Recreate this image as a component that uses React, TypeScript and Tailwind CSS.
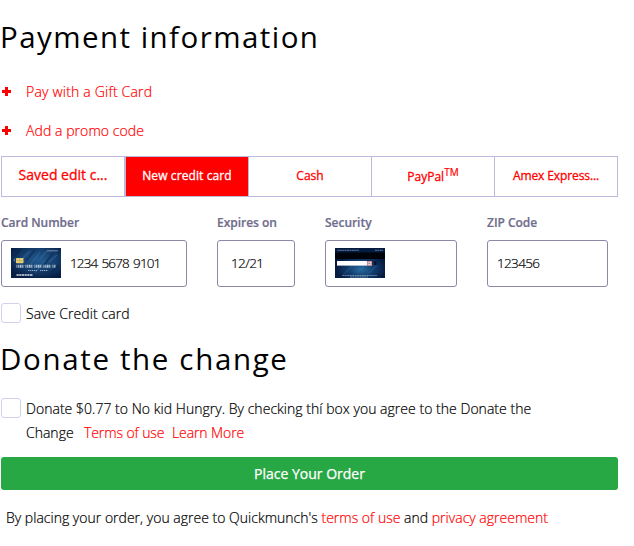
import type { ReactNode } from "react";

function CardFront() {
  return (
    <svg width="50" height="30" viewBox="0 0 50 30" className="mb-px shrink-0">
      <defs>
        <radialGradient id="front" cx="0.55" cy="0.4" r="0.65">
          <stop offset="0" stopColor="#235b91" />
          <stop offset="0.55" stopColor="#153f6e" />
          <stop offset="1" stopColor="#071d42" />
        </radialGradient>
      </defs>
      <rect width="50" height="30" fill="url(#front)" />
      <path d="M12 10L19 3M20 16L29 4M29 11L36 3M38 14L46 7M24 25L34 12" stroke="#3a76ab" strokeWidth="1.2" opacity="0.45" />
      <path d="M15 13L24 2M33 17L42 5M4 8L9 2M40 25L48 17" stroke="#06234d" strokeWidth="1.5" opacity="0.55" />
      <rect x="36" y="2.3" width="11" height="1" fill="#b7c8d8" opacity="0.6" />
      <path d="M4 10.5L2.8 12L4 13.5" stroke="#b9c6cf" strokeWidth="0.6" fill="none" />
      <rect x="5" y="10" width="7.5" height="5.2" rx="0.6" fill="#e6cd78" />
      <path d="M5 12.5H12.5M8.7 10V15" stroke="#b89b4d" strokeWidth="0.4" />
      <path d="M5.5 18.3H44.5" stroke="#e1eaf1" strokeWidth="3" strokeDasharray="0.9 0.8 1.2 0.6 1.5 0.7 1.1 2.2" opacity="0.85" />
      <path d="M5.5 17.6H44.5M6.5 19.2H44.5" stroke="#5c7f9f" strokeWidth="0.6" strokeDasharray="0.8 1.1" />
      <path d="M17 22.5H26M29 22.5H37" stroke="#a9bdcf" strokeWidth="0.9" strokeDasharray="1.3 0.7" />
      <path d="M5.5 27H22" stroke="#d5dee7" strokeWidth="1.4" strokeDasharray="2.2 0.5" />
    </svg>
  );
}

function CardBack() {
  return (
    <svg width="50" height="30" viewBox="0 0 50 30" className="mb-px shrink-0">
      <defs>
        <radialGradient id="back" cx="0.52" cy="0.7" r="0.5">
          <stop offset="0" stopColor="#2a6c9f" />
          <stop offset="0.5" stopColor="#123f70" />
          <stop offset="1" stopColor="#061b40" />
        </radialGradient>
      </defs>
      <rect width="50" height="30" fill="url(#back)" />
      <path d="M8 27L17 18M22 25L29 18M32 27L42 17" stroke="#3980b0" strokeWidth="1.2" opacity="0.25" />
      <path d="M2.5 2.3H24M40 2.3H48" stroke="#a8bbcc" strokeWidth="0.9" opacity="0.65" strokeDasharray="2 0.4" />
      <rect y="4.5" width="50" height="6.5" fill="#01030a" />
      <rect x="2" y="13" width="35" height="4.6" fill="#fff" />
      <rect x="32.3" y="13.4" width="4.2" height="3.8" fill="#f4dfe0" stroke="#c45f6b" strokeWidth="0.7" />
      <rect x="33.2" y="14.8" width="2.3" height="0.9" fill="#77777f" />
      <rect x="39" y="13.5" width="2.5" height="3.5" fill="#051127" />
      <path d="M7.5 27.5H42M15 29H33" stroke="#b5c7d6" strokeWidth="0.7" opacity="0.75" strokeDasharray="2 0.4" />
    </svg>
  );
}

function Extra({ children, className }: { children: string; className: string }) {
  return (
    <a className="flex h-[39px] items-center text-[14px] text-[#f00]">
      <svg width="9" height="9" viewBox="0 0 9 9" className="ml-px mr-[15px]" shapeRendering="crispEdges">
        <path d="M3 0H6V3H9V6H6V9H3V6H0V3H3Z" fill="#f00" />
      </svg>
      <span className={className}>{children}</span>
    </a>
  );
}

function Field({ label, className, children }: { label: string; className: string; children: ReactNode }) {
  return (
    <div className={className}>
      <div className="h-[28px] pt-px text-[12px] leading-5 font-semibold tracking-[-0.03px] text-[#6f6d8c]">{label}</div>
      <div className="flex h-[47px] items-center rounded-[3px] border border-[#8b89a5] px-[9px] text-[14px] text-[#000]">{children}</div>
    </div>
  );
}

function Checkbox() {
  return <span className="h-5 w-5 shrink-0 rounded-[3px] border border-[#d3d0ec] bg-white" />;
}

export default function App() {
  return (
    <main className="h-[546px] w-[634px] overflow-hidden bg-white pl-px font-['Open_Sans','Noto_Sans',sans-serif] font-light whitespace-nowrap text-black [-webkit-text-stroke:0.2px]">
      <h1 className="-ml-px h-[72px] pt-[17px] text-[29.5px] leading-10 font-normal tracking-[1.45px] [-webkit-text-stroke:0px]">Payment information</h1>
      <Extra className="tracking-[0.2px]">Pay with a Gift Card</Extra>
      <Extra className="tracking-[0.07px]">Add a promo code</Extra>
      <div className="mt-[6px] flex h-[41px] w-[617px] border border-[#bdb9da] text-[12px] font-normal text-[#f00] [-webkit-text-stroke:0.3px]">
        <div className="flex w-[123px] items-center justify-center border-r border-[#bdb9da] pb-[4px] text-[14px]">Saved edit c...</div>
        <div className="flex w-[124px] items-center justify-center border-x border-[#bdb9da] bg-[#f00] pb-px tracking-[0.1px] text-white">New credit card</div>
        <div className="flex w-[123px] items-center justify-center border-r border-[#bdb9da] pb-px">Cash</div>
        <div className="flex w-[123px] items-center justify-center border-r border-[#bdb9da]">
          <span>PayPal<sup className="text-[10px] [-webkit-text-stroke:0.2px]">TM</sup></span>
        </div>
        <div className="flex flex-1 items-center justify-center pb-px tracking-[-0.1px]">Amex Express...</div>
      </div>
      <div className="mt-[15px] flex gap-[30px]">
        <Field label="Card Number" className="w-[186px]"><CardFront /><span className="ml-[9px] text-[13.5px] tracking-[-0.88px] [word-spacing:1.6px]">1234 5678 9101</span></Field>
        <Field label="Expires on" className="w-[78px]"><span className="ml-[4px] text-[13.5px] tracking-[-0.6px]">12/21</span></Field>
        <Field label="Security" className="w-[132px]"><CardBack /></Field>
        <Field label="ZIP Code" className="w-[121px]"><span className="text-[13.5px] tracking-[-0.65px]">123456</span></Field>
      </div>
      <label className="mt-4 flex h-5 items-center gap-[5px] text-[14px] tracking-[0.08px]"><Checkbox /><span>Save Credit card</span></label>
      <h2 className="-ml-px mt-[16px] h-[59px] text-[29.5px] leading-10 font-normal tracking-[1.65px] [-webkit-text-stroke:0px]">Donate the change</h2>
      <div className="flex h-[59px] gap-[5px] text-[14px] leading-6">
        <Checkbox />
        <div className="-mt-[1px]">
          <p className="tracking-[0.03px]">Donate $0.77 to No kid Hungry. By checking thí box you agree to the Donate the</p>
          <p className="flex"><span className="w-[58px]">Change</span><a className="w-[88px] tracking-[-0.1px] text-[#f00]">Terms of use</a><a className="tracking-[-0.1px] text-[#f00]">Learn More</a></p>
        </div>
      </div>
      <button className="flex h-[33px] w-[617px] items-center justify-center rounded-[3px] bg-[#28a745] pb-px text-[14px] font-normal text-white [-webkit-text-stroke:0.25px]">Place Your Order</button>
      <p className="mt-[16px] ml-[5px] text-[14px] leading-6 tracking-[0.01px]">By placing your order, you agree to Quickmunch's <a className="text-[#f00]">terms of use</a> and <a className="text-[#f00]">privacy agreement</a></p>
    </main>
  );
}
